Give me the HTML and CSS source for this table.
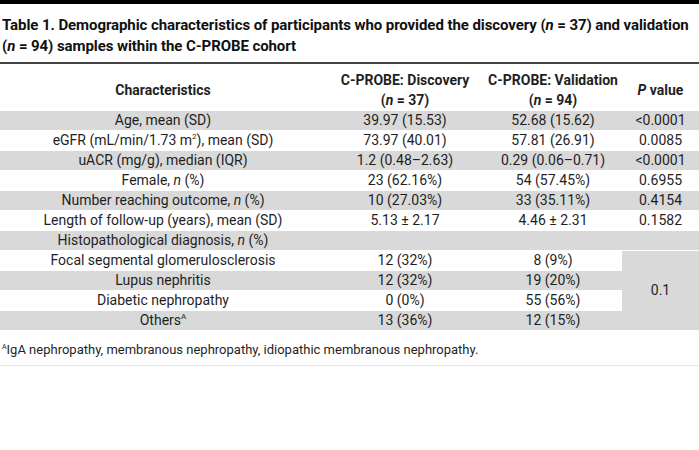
FILE: index.html
```html
<!DOCTYPE html>
<html>
<head>
<meta charset="utf-8">
<link rel="stylesheet" href="styles.css">
</head>
<body>
<div class="topbar"></div>
<h1 class="caption"><span class="cl">Table 1. Demographic characteristics of participants who provided the discovery (<i>n</i> = 37) and validation</span> <span class="cl">(<i>n</i> = 94) samples within the C-PROBE cohort</span></h1>
<table class="data">
  <thead>
    <tr>
      <th class="c1">Characteristics</th>
      <th class="c2">C-PROBE: Discovery<br>(<i>n</i> = 37)</th>
      <th class="c3">C-PROBE: Validation<br>(<i>n</i> = 94)</th>
      <th class="c4"><i>P</i> value</th>
    </tr>
  </thead>
  <tbody>
    <tr class="alt"><td>Age, mean (SD)</td><td>39.97 (15.53)</td><td>52.68 (15.62)</td><td>&lt;0.0001</td></tr>
    <tr><td>eGFR (mL/min/1.73 m<sup>2</sup>), mean (SD)</td><td>73.97 (40.01)</td><td>57.81 (26.91)</td><td>0.0085</td></tr>
    <tr class="alt"><td>uACR (mg/g), median (IQR)</td><td>1.2 (0.48–2.63)</td><td>0.29 (0.06–0.71)</td><td>&lt;0.0001</td></tr>
    <tr><td>Female, <i>n</i> (%)</td><td>23 (62.16%)</td><td>54 (57.45%)</td><td>0.6955</td></tr>
    <tr class="alt"><td>Number reaching outcome, <i>n</i> (%)</td><td>10 (27.03%)</td><td>33 (35.11%)</td><td>0.4154</td></tr>
    <tr><td>Length of follow-up (years), mean (SD)</td><td>5.13 ± 2.17</td><td>4.46 ± 2.31</td><td>0.1582</td></tr>
    <tr class="alt"><td>Histopathological diagnosis, <i>n</i> (%)</td><td></td><td></td><td></td></tr>
    <tr><td>Focal segmental glomerulosclerosis</td><td>12 (32%)</td><td>8 (9%)</td><td class="span" rowspan="4">0.1</td></tr>
    <tr class="alt"><td>Lupus nephritis</td><td>12 (32%)</td><td>19 (20%)</td></tr>
    <tr><td>Diabetic nephropathy</td><td>0 (0%)</td><td>55 (56%)</td></tr>
    <tr class="alt"><td>Others<sup>A</sup></td><td>13 (36%)</td><td>12 (15%)</td></tr>
  </tbody>
</table>
<p class="note"><sup>A</sup>IgA nephropathy, membranous nephropathy, idiopathic membranous nephropathy.</p>
</body>
</html>
```
FILE: styles.css
```css
html, body {
  margin: 0;
  padding: 0;
  background: #fff;
}
body {
  font-family: Roboto, "Noto Sans", sans-serif;
  color: #1f1f1f;
  width: 699px;
}
.topbar {
  height: 4px;
  background: #000;
}
.caption {
  margin: 0;
  padding: 11px 2px 0 2px;
  font-size: 15px;
  line-height: 21px;
  font-weight: 700;
  color: #111;
  height: 47px;
  border-bottom: 2px solid #444;
  letter-spacing: -0.08px;
}
.caption .cl {
  display: block;
  white-space: nowrap;
}
.caption i {
  font-style: italic;
}
.data {
  width: 699px;
  border-collapse: separate;
  border-spacing: 0;
  table-layout: fixed;
  font-size: 14px;
}
.data .c1 { width: 326px; }
.data .c2 { width: 158px; }
.data .c3 { width: 138px; }
.data .c4 { width: 77px; }
.data th {
  height: 40px;
  padding: 6px 0 0 0;
  font-weight: 700;
  line-height: 20px;
  text-align: center;
  vertical-align: middle;
}
.data td {
  height: 19px;
  padding: 0;
  border-top: 1px solid #fff;
  line-height: 19px;
  text-align: center;
  white-space: nowrap;
}
.data tr.alt td,
.data td.span {
  background: #d9d9d9;
}
.data sup {
  font-size: 8px;
  line-height: 0;
  vertical-align: 6px;
}
.note {
  margin: 0;
  padding: 12px 2px 0 2px;
  height: 23px;
  font-size: 13px;
  line-height: 16px;
  border-bottom: 1px solid #e6e6e6;
}
.note sup {
  font-size: 7px;
  line-height: 0;
  vertical-align: 5px;
}
```
